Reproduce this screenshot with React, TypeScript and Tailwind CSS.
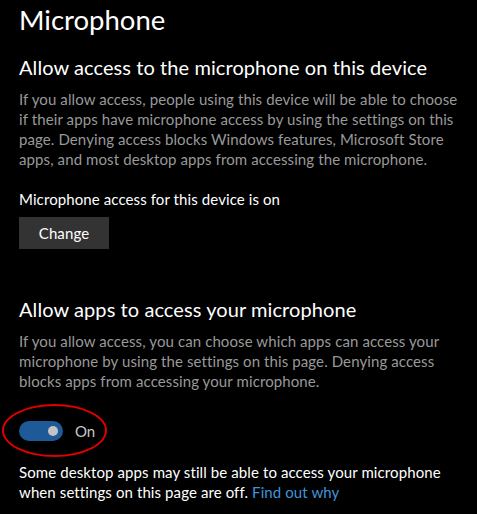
const font = { fontFamily: 'Lato, "Noto Sans", sans-serif' };

export default function App() {
  return (
    <div
      className="h-[514px] w-[477px] overflow-hidden bg-black px-[19px] pt-[2px] text-white"
      style={font}
    >
      <h1 className="text-[27.5px] leading-[36px] font-normal">Microphone</h1>

      <section className="mt-[15px]">
        <h2 className="text-[20px] leading-[28px] tracking-[0.08px]">
          Allow access to the microphone on this device
        </h2>
        <p className="mt-[8px] whitespace-nowrap text-[15px] leading-[20px] tracking-[0.1px] text-[#999999]">
          If you allow access, people using this device will be able to choose
          <br />
          if their apps have microphone access by using the settings on this
          <br />
          page. Denying access blocks Windows features, Microsoft Store
          <br />
          apps, and most desktop apps from accessing the microphone.
        </p>
        <p className="mt-[20px] text-[15px] leading-[20px] tracking-[0.1px]">
          Microphone access for this device is on
        </p>
        <button className="mt-[8px] block h-[32px] w-[90px] bg-[#333333] text-[15px] tracking-[0.1px] text-white">
          Change
        </button>
      </section>

      <section className="mt-[46px]">
        <h2 className="text-[20px] leading-[28px] tracking-[0.08px]">
          Allow apps to access your microphone
        </h2>
        <p className="mt-[8px] whitespace-nowrap text-[15px] leading-[20px] tracking-[0.1px] text-[#999999]">
          If you allow access, you can choose which apps can access your
          <br />
          microphone by using the settings on this page. Denying access
          <br />
          blocks apps from accessing your microphone.
        </p>

        <div className="relative mt-[30px] flex h-[20px] items-center gap-[12px]">
          <div className="relative h-[20px] w-[44px] rounded-full bg-[#1e5a98]">
            <span className="absolute right-[5px] top-[5px] h-[10px] w-[10px] rounded-full bg-[#c4c4c4]" />
          </div>
          <span className="text-[15px] leading-[20px] text-[#c8c8c8]">On</span>
          <span className="pointer-events-none absolute left-[-17px] top-[-17px] h-[53px] w-[105px] rounded-[50%] border-2 border-[#e00000]" />
        </div>

        <p className="mt-[21px] whitespace-nowrap text-[15px] leading-[20px] tracking-[0.1px]">
          Some desktop apps may still be able to access your microphone
          <br />
          when settings on this page are off.{" "}
          <a className="text-[#3f95dc]" href="#">
            Find out why
          </a>
        </p>
      </section>
    </div>
  );
}
